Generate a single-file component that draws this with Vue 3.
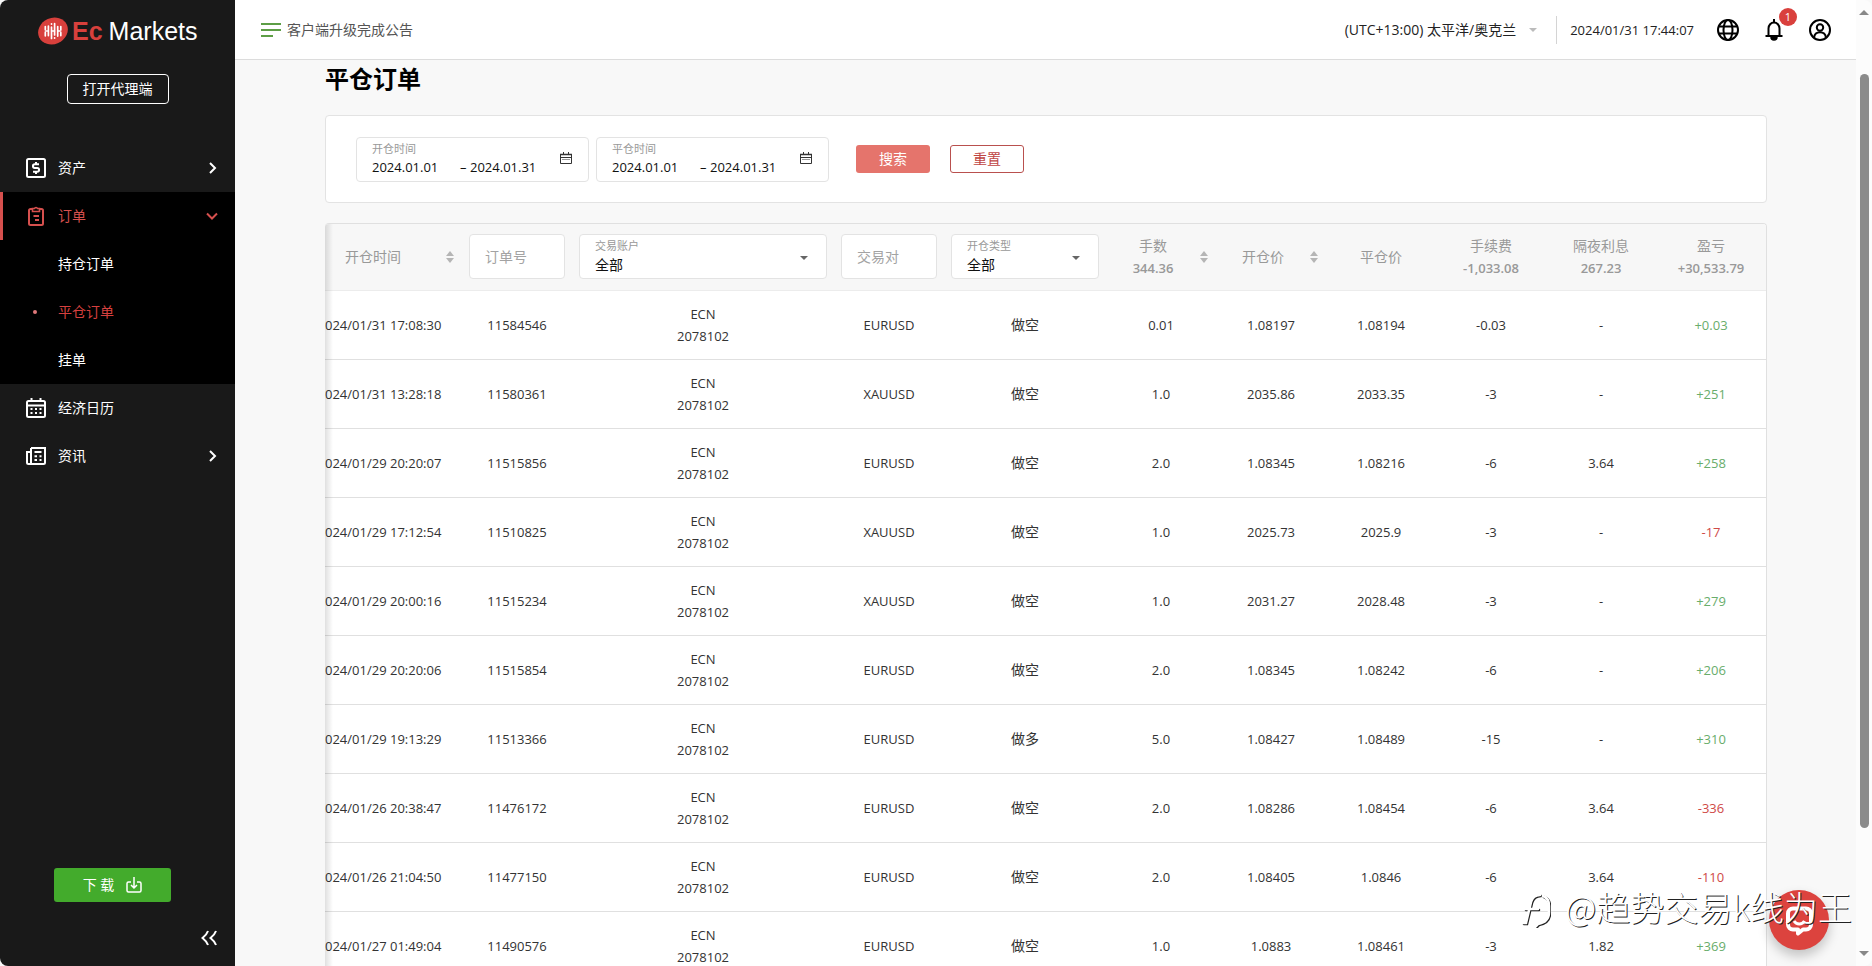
<script setup>
import { ref } from 'vue'

const openFrom = ref('2024.01.01')
const openTo = ref('2024.01.31')
const closeFrom = ref('2024.01.01')
const closeTo = ref('2024.01.31')
const orderNo = ref('')
const symbol = ref('')

const rows = [
  ['024/01/31 17:08:30', '11584546', 'EURUSD', '做空', '0.01', '1.08197', '1.08194', '-0.03', '-', '+0.03'],
  ['024/01/31 13:28:18', '11580361', 'XAUUSD', '做空', '1.0', '2035.86', '2033.35', '-3', '-', '+251'],
  ['024/01/29 20:20:07', '11515856', 'EURUSD', '做空', '2.0', '1.08345', '1.08216', '-6', '3.64', '+258'],
  ['024/01/29 17:12:54', '11510825', 'XAUUSD', '做空', '1.0', '2025.73', '2025.9', '-3', '-', '-17'],
  ['024/01/29 20:00:16', '11515234', 'XAUUSD', '做空', '1.0', '2031.27', '2028.48', '-3', '-', '+279'],
  ['024/01/29 20:20:06', '11515854', 'EURUSD', '做空', '2.0', '1.08345', '1.08242', '-6', '-', '+206'],
  ['024/01/29 19:13:29', '11513366', 'EURUSD', '做多', '5.0', '1.08427', '1.08489', '-15', '-', '+310'],
  ['024/01/26 20:38:47', '11476172', 'EURUSD', '做空', '2.0', '1.08286', '1.08454', '-6', '3.64', '-336'],
  ['024/01/26 21:04:50', '11477150', 'EURUSD', '做空', '2.0', '1.08405', '1.0846', '-6', '3.64', '-110'],
  ['024/01/27 01:49:04', '11490576', 'EURUSD', '做空', '1.0', '1.0883', '1.08461', '-3', '1.82', '+369'],
]
</script>

<template>
  <div class="app">
    <aside class="sidebar">
      <div class="logo">
        <svg class="logo-mark" viewBox="0 0 30 28" aria-hidden="true">
          <ellipse cx="15" cy="14" rx="15.2" ry="13" transform="rotate(-24 15 14)" fill="#d8403c" />
          <g stroke="#fff" stroke-width="1.7" fill="none" stroke-linecap="round">
            <path d="M7.3 9.5v3M7.3 15.4v3.4M10.4 9v9.6M13.5 10v11.4M16.6 6.5v11.5M19.7 9.5v9.6M22.8 9.5v3.2M22.8 15.6v3" />
            <path d="M7.3 14h3.1M13.5 14h3.1M19.7 14h3.1" stroke-width="1.3" />
            <path d="M13.5 7v.1M16.6 21v.1" stroke-width="1.8" />
          </g>
        </svg>
        <span class="logo-ec">Ec</span><span class="logo-name">Markets</span>
      </div>
      <button class="agent" type="button">打开代理端</button>

      <nav class="menu">
        <a href="#" class="item">
          <svg class="icon" viewBox="0 0 20 20" fill="none" stroke="currentColor" stroke-width="2">
            <rect x="1" y="1" width="18" height="18" rx="1.5" />
            <path d="M13 6.2H8.8a1.8 1.8 0 0 0 0 3.7h2.4a1.8 1.8 0 0 1 0 3.8H7M10 4v2.2M10 13.7V16" />
          </svg>
          <span>资产</span>
          <svg class="chev" viewBox="0 0 12 12" fill="none" stroke="currentColor" stroke-width="2"><path d="M4 1l5 5-5 5" /></svg>
        </a>
        <div class="group">
          <a href="#" class="item active">
            <svg class="icon" viewBox="0 0 20 20" fill="none" stroke="currentColor" stroke-width="2">
              <path d="M6 3H4.500A1.500 1.500 0 0 0 3 4.500v13A1.500 1.500 0 0 0 4.500 19h11a1.500 1.500 0 0 0 1.500-1.500v-13A1.500 1.500 0 0 0 15.500 3H14" />
              <path d="M6.500 2.500v3h7v-3h-2a1.600 1.600 0 0 0-3 0z" stroke-width="1.6" />
              <path d="M7.500 10h5.500M9 14h4" stroke-width="1.8" />
            </svg>
            <span>订单</span>
            <svg class="chev" viewBox="0 0 12 12" fill="none" stroke="currentColor" stroke-width="2"><path d="M1 3.500l5 5 5-5" /></svg>
          </a>
          <a href="#" class="item sub">持仓订单</a>
          <a href="#" class="item sub current"><i class="dot"></i>平仓订单</a>
          <a href="#" class="item sub">挂单</a>
        </div>
        <a href="#" class="item">
          <svg class="icon" viewBox="0 0 20 20" fill="none" stroke="currentColor" stroke-width="2">
            <rect x="1" y="3" width="18" height="16" rx="1.5" />
            <path d="M1 7.500h18M5.500 0v4M14.500 0v4" />
            <path d="M4.500 11h2M9 11h2M13.500 11h2M4.500 15h2M9 15h2M13.500 15h2" />
          </svg>
          <span>经济日历</span>
        </a>
        <a href="#" class="item">
          <svg class="icon" viewBox="0 0 20 20" fill="none" stroke="currentColor" stroke-width="2">
            <path d="M5 2h14v14.500a1.500 1.500 0 0 1-1.500 1.500h-15A1.500 1.500 0 0 1 1 16.500V6h4M5 2v16" />
            <path d="M8.500 6h7M8.500 10.300h2.500M13.500 10.300h2M8.500 14h2.500M13.500 14h2" />
          </svg>
          <span>资讯</span>
          <svg class="chev" viewBox="0 0 12 12" fill="none" stroke="currentColor" stroke-width="2"><path d="M4 1l5 5-5 5" /></svg>
        </a>
      </nav>

      <button class="download" type="button">
        <span>下 载</span>
        <svg viewBox="0 0 16 16" fill="none" stroke="currentColor" stroke-width="1.500">
          <path d="M5 5H2.500A1.500 1.500 0 0 0 1 6.500v7A1.500 1.500 0 0 0 2.500 15h11a1.500 1.500 0 0 0 1.500-1.500v-7A1.500 1.500 0 0 0 13.500 5H11M8 0v11M5 8l3 3 3-3" />
        </svg>
      </button>
      <button class="collapse" type="button" aria-label="收起">
        <svg viewBox="0 0 16 16" fill="none" stroke="currentColor" stroke-width="2"><path d="M7 1C6 4 4 6 1.500 8 4 10 6 12 7 15M15 1c-1 3-3 5-5.500 7 2.500 2 4.500 4 5.500 7" /></svg>
      </button>
    </aside>

    <div class="main">
      <header class="topbar">
        <svg class="burger" viewBox="0 0 20 14" stroke="#5d9e46" stroke-width="2"><path d="M0 1h20M0 7h20M0 13h12" /></svg>
        <a href="#" class="notice">客户端升级完成公告</a>
        <button class="zone" type="button">(UTC+13:00) 太平洋/奥克兰 <i class="caret pale"></i></button>
        <time class="clock">2024/01/31 17:44:07</time>
        <button class="tool" type="button" aria-label="语言">
          <svg viewBox="0 0 22 22" fill="none" stroke="#000" stroke-width="2">
            <circle cx="11" cy="11" r="10" /><ellipse cx="11" cy="11" rx="4.500" ry="10" /><path d="M2 7.500h18M2 14.500h18" />
          </svg>
        </button>
        <button class="tool" type="button" aria-label="通知">
          <svg viewBox="0 0 22 22" fill="none" stroke="#000" stroke-width="2">
            <path d="M5.500 16.500V9.500a5.500 6 0 0 1 11 0v7M2.500 17h17" /><path d="M11 0v3.500" /><path d="M8 18a3 3 0 0 0 6 0z" fill="#000" stroke-width="1.500" />
          </svg>
          <span class="badge">1</span>
        </button>
        <button class="tool" type="button" aria-label="用户">
          <svg viewBox="0 0 22 22" fill="none" stroke="#000" stroke-width="2">
            <circle cx="11" cy="11" r="10" /><circle cx="11" cy="8.500" r="3.200" /><path d="M5 18.500c.5-3.500 2.800-5.300 6-5.300s5.500 1.800 6 5.300" />
          </svg>
        </button>
      </header>

      <main class="content">
        <h1>平仓订单</h1>
        <form class="filters" @submit.prevent>
          <div class="range">
            <div class="range-body">
              <label for="open-from">开仓时间</label>
              <div class="dates">
                <input id="open-from" v-model="openFrom" type="text" /><span class="dash">–</span><input v-model="openTo" type="text" aria-label="开仓时间结束" />
              </div>
            </div>
            <svg class="cal" viewBox="0 0 12 12" fill="none" stroke="#333" stroke-width="1"><path d="M.500 2.500h11v9H.500zM.500 5.500h11M3.500 0v3M8.500 0v3" /><path d="M0 2.500h12" stroke-width="1.500" /><path d="M2.500 7.500h7" stroke-dasharray="1 1" /></svg>
          </div>
          <div class="range">
            <div class="range-body">
              <label for="close-from">平仓时间</label>
              <div class="dates">
                <input id="close-from" v-model="closeFrom" type="text" /><span class="dash">–</span><input v-model="closeTo" type="text" aria-label="平仓时间结束" />
              </div>
            </div>
            <svg class="cal" viewBox="0 0 12 12" fill="none" stroke="#333" stroke-width="1"><path d="M.500 2.500h11v9H.500zM.500 5.500h11M3.500 0v3M8.500 0v3" /><path d="M0 2.500h12" stroke-width="1.500" /><path d="M2.500 7.500h7" stroke-dasharray="1 1" /></svg>
          </div>
          <button class="btn solid" type="submit">搜索</button>
          <button class="btn line" type="reset">重置</button>
        </form>

        <div class="table-wrap">
          <table>
            <colgroup>
              <col class="w-time" /><col class="w-std" /><col class="w-acct" /><col class="w-std" /><col class="w-type" />
              <col v-for="n in 6" :key="n" class="w-std" />
            </colgroup>
            <thead>
              <tr>
                <th><div class="sortable"><span>开仓时间</span><button class="sort" type="button" aria-label="按开仓时间排序"><i></i><i></i></button></div></th>
                <th><input v-model="orderNo" class="box" type="text" placeholder="订单号" aria-label="订单号" /></th>
                <th>
                  <div class="box pick">
                    <label for="acct">交易账户</label>
                    <select id="acct"><option>全部</option></select>
                    <i class="caret"></i>
                  </div>
                </th>
                <th><input v-model="symbol" class="box" type="text" placeholder="交易对" aria-label="交易对" /></th>
                <th>
                  <div class="box pick">
                    <label for="kind">开仓类型</label>
                    <select id="kind"><option>全部</option></select>
                    <i class="caret"></i>
                  </div>
                </th>
                <th><div class="sortable"><span>手数<b>344.36</b></span><button class="sort" type="button" aria-label="按手数排序"><i></i><i></i></button></div></th>
                <th><div class="sortable"><span>开仓价</span><button class="sort" type="button" aria-label="按开仓价排序"><i></i><i></i></button></div></th>
                <th>平仓价</th>
                <th>手续费<b>-1,033.08</b></th>
                <th>隔夜利息<b>267.23</b></th>
                <th>盈亏<b>+30,533.79</b></th>
              </tr>
            </thead>
            <tbody>
              <tr v-for="r in rows" :key="r[1]">
                <td class="time">{{ r[0] }}</td>
                <td>{{ r[1] }}</td>
                <td>ECN<br />2078102</td>
                <td>{{ r[2] }}</td>
                <td class="cjk">{{ r[3] }}</td>
                <td>{{ r[4] }}</td>
                <td>{{ r[5] }}</td>
                <td>{{ r[6] }}</td>
                <td>{{ r[7] }}</td>
                <td>{{ r[8] }}</td>
                <td :class="r[9].startsWith('-') ? 'loss' : 'gain'">{{ r[9] }}</td>
              </tr>
            </tbody>
          </table>
        </div>
      </main>
    </div>

    <div class="scroll" aria-hidden="true">
      <i class="tri up"></i>
      <div class="track"><div class="thumb"></div></div>
      <i class="tri down"></i>
    </div>

    <button class="chat" type="button" aria-label="客服">
      <svg viewBox="0 0 32 32" fill="none" stroke="#fff" stroke-width="4" stroke-linejoin="round">
        <path d="M10 4.500h13a5 5 0 0 1 5 5v11a5 5 0 0 1-5 5h-3l-5 4v-4h-5a5 5 0 0 1-5-5v-11a5 5 0 0 1 5-5z" />
        <path d="M11 17c2.500 4 8 4 10.500 0" stroke-width="3" />
      </svg>
    </button>
    <div class="watermark">
      <svg viewBox="0 0 30 36" fill="none" stroke-linecap="round">
        <g stroke="#222" transform="translate(1 1)" stroke-width="2.600"><path d="M2 31h3l5-21q2-7 9-7M4 17h13M22 4q6 2 6 10v6q0 10-11 12l-3 3" /></g>
        <g stroke="#fff" stroke-width="2.600"><path d="M2 31h3l5-21q2-7 9-7M4 17h13M22 4q6 2 6 10v6q0 10-11 12l-3 3" /></g>
      </svg>
      <span>@趋势交易k线为王</span>
    </div>
  </div>
</template>

<style>
body {
  margin: 0;
  overflow: hidden;
}
</style>

<style scoped>
.app {
  display: flex;
  height: 100vh;
  position: relative;
  overflow: hidden;
  background: #f8f8f8;
  color: #333;
  font: 13px/22px "Open Sans", "Noto Sans CJK SC", sans-serif;
}
.app *,
.app *::before {
  box-sizing: border-box;
}
button,
input,
select {
  font: inherit;
  color: inherit;
  margin: 0;
  padding: 0;
  border: 0;
  background: none;
}
input:focus,
select:focus {
  outline: none;
}
a {
  color: inherit;
  text-decoration: none;
}
svg {
  display: block;
  flex: none;
}

.sidebar {
  width: 235px;
  flex: none;
  display: flex;
  flex-direction: column;
  background: #191919;
  color: #fff;
  font-size: 14px;
  border-radius: 8px 0 0 8px;
}
.logo {
  display: flex;
  align-items: center;
  height: 62px;
  padding-left: 38px;
  font-family: "Liberation Sans", Arial, sans-serif;
  font-size: 25px;
  line-height: 28px;
}
.logo-mark {
  width: 30px;
  height: 28px;
  margin-right: 4px;
}
.logo-ec {
  color: #d8403c;
  font-weight: 700;
  margin-right: 6px;
}
.agent {
  align-self: center;
  width: 102px;
  height: 30px;
  margin-top: 12px;
  border: 1px solid #fff;
  border-radius: 4px;
  line-height: 20px;
}
.menu {
  margin-top: 40px;
}
.item {
  display: flex;
  align-items: center;
  height: 48px;
  padding: 0 16px 0 26px;
}
.icon {
  width: 20px;
  height: 20px;
  margin-right: 12px;
}
.chev {
  width: 12px;
  height: 12px;
  margin-left: auto;
  margin-right: 1px;
}
.group {
  background: #000;
}
.active {
  color: #d6504e;
  border-left: 3px solid #d6504e;
  padding-left: 23px;
}
.sub {
  padding-left: 58px;
  position: relative;
}
.current {
  color: #d6403f;
}
.dot {
  position: absolute;
  left: 33px;
  width: 4px;
  height: 4px;
  border-radius: 50%;
  background: #e0787a;
}
.download {
  display: flex;
  align-items: center;
  justify-content: center;
  gap: 12px;
  width: 117px;
  height: 34px;
  margin: auto 0 0 54px;
  border-radius: 3px;
  background: #43ab2c;
}
.download svg {
  width: 16px;
  height: 16px;
}
.collapse {
  align-self: flex-end;
  margin: 28px 18px 20px 0;
}
.collapse svg {
  width: 16px;
  height: 16px;
}

.main {
  flex: 1;
  min-width: 0;
  display: flex;
  flex-direction: column;
}
.topbar {
  display: flex;
  align-items: center;
  height: 60px;
  flex: none;
  padding: 0 25px 0 26px;
  background: #fff;
  border-bottom: 1px solid #dcdcdc;
  color: #222;
}
.burger {
  width: 20px;
  height: 14px;
  margin-right: 6px;
}
.notice {
  font-size: 14px;
  color: #555;
}
.zone {
  display: flex;
  align-items: center;
  gap: 13px;
  margin-left: auto;
  height: 28px;
  padding-right: 19px;
  border-right: 1px solid #d4d4d4;
  font-size: 14px;
}
.clock {
  margin: 0 23px 0 13px;
}
.caret {
  border: 4px solid transparent;
  border-top-color: #666;
  border-bottom: 0;
}
.pale {
  border-top-color: #bbb;
}
.tool {
  position: relative;
  margin-left: 24px;
}
.clock + .tool {
  margin-left: 0;
}
.tool svg {
  width: 22px;
  height: 22px;
}
.badge {
  position: absolute;
  top: -11px;
  left: 16px;
  width: 18px;
  height: 18px;
  border-radius: 50%;
  background: #d9403d;
  color: #fff;
  font-size: 11px;
  line-height: 18px;
}

.content {
  flex: 1;
  min-height: 0;
  overflow: hidden;
  padding: 1px 89px 0 90px;
}
h1 {
  margin: 0 0 18px;
  color: #000;
  font-size: 24px;
  line-height: 36px;
  font-weight: 700;
}
.filters {
  display: flex;
  align-items: center;
  height: 88px;
  padding: 0 30px;
  background: #fff;
  border: 1px solid #e3e3e3;
  border-radius: 4px;
}
.range {
  display: flex;
  align-items: center;
  justify-content: space-between;
  width: 233px;
  height: 45px;
  margin-right: 7px;
  padding: 0 16px 0 15px;
  border: 1px solid #e3e3e3;
  border-radius: 4px;
}
.range label,
.pick label {
  display: block;
  color: #999;
  font-size: 11px;
  line-height: 14px;
}
.dates {
  display: flex;
  align-items: center;
  height: 20px;
  margin-top: 1px;
  color: #111;
}
.dates input {
  width: 70px;
  height: 20px;
}
.dash {
  width: 10px;
  margin-left: 18px;
}
.cal {
  width: 12px;
  height: 12px;
  margin-top: -2px;
}
.btn {
  width: 74px;
  height: 28px;
  border-radius: 3px;
  font-size: 14px;
  line-height: 20px;
}
.solid {
  margin: 0 20px;
  background: #e5746c;
  color: #fff;
}
.line {
  border: 1px solid #b9504e;
  color: #bf4543;
}

.table-wrap {
  position: relative;
  margin-top: 20px;
  overflow: hidden;
  background: #fff;
  border-top: 1px solid #e0e0e0;
  border-right: 1px solid #e0e0e0;
  border-radius: 4px 4px 0 0;
}
.table-wrap::before {
  content: "";
  position: absolute;
  z-index: 1;
  inset: 0 auto 0 0;
  width: 8px;
  background: linear-gradient(90deg, rgba(0, 0, 0, 0.12), transparent);
}
table {
  width: calc(100% + 25px);
  margin-left: -25px;
  table-layout: fixed;
  border-collapse: collapse;
  text-align: center;
}
.w-time,
.w-type {
  width: 162px;
}
.w-std {
  width: 110px;
}
.w-acct {
  width: 262px;
}
th {
  height: 66px;
  padding: 0;
  background: #f7f7f7;
  border-bottom: 1px solid #ececec;
  color: #999;
  font-size: 14px;
  font-weight: 400;
}
th b {
  display: block;
  font-size: 13px;
  font-weight: 600;
}
.sortable {
  display: flex;
  align-items: center;
  padding: 0 4px;
}
.sortable > span {
  flex: 1;
}
.sort {
  width: 16px;
  display: flex;
  flex-direction: column;
  align-items: center;
  gap: 2px;
}
.sort i {
  border: 4px solid transparent;
  border-top: 0;
  border-bottom: 5px solid #b5b5b5;
}
.sort i + i {
  border-top: 5px solid #b5b5b5;
  border-bottom: 0;
}
.box {
  display: block;
  position: relative;
  width: calc(100% - 14px);
  height: 45px;
  margin: 0 7px;
  padding: 0 15px;
  background: #fff;
  border: 1px solid #e3e3e3;
  border-radius: 4px;
  text-align: left;
}
.box::placeholder {
  color: #a3a3a3;
  opacity: 1;
}
.pick label {
  margin-top: 4px;
}
.pick select {
  display: block;
  width: 100%;
  height: 24px;
  appearance: none;
  color: #111;
}
.pick .caret {
  position: absolute;
  right: 18px;
  top: 21px;
  pointer-events: none;
}
td {
  height: 69px;
  padding: 0;
  border-bottom: 1px solid #e0e0e0;
}
.time {
  padding-left: 25px;
  text-align: left;
}
.cjk {
  font-size: 14px;
}
.gain {
  color: #69ad6b;
}
.loss {
  color: #cf4a47;
}

.scroll {
  width: 16px;
  flex: none;
  display: flex;
  flex-direction: column;
  align-items: center;
  background: #fcfcfc;
  border-radius: 0 8px 8px 0;
  padding: 10px 0;
}
.tri {
  border: 5px solid transparent;
  border-top: 0;
  border-bottom: 5px solid #888;
}
.down {
  border-top: 5px solid #888;
  border-bottom: 0;
}
.track {
  flex: 1;
  width: 9px;
  padding-top: 59px;
}
.thumb {
  height: 86%;
  border-radius: 5px;
  background: #8b8b8b;
}

.chat {
  position: absolute;
  right: 43px;
  bottom: 16px;
  display: flex;
  align-items: center;
  justify-content: center;
  width: 60px;
  height: 60px;
  border-radius: 50%;
  background: #dc433e;
  box-shadow: 0 6px 12px rgba(0, 0, 0, 0.22);
}
.chat svg {
  width: 32px;
  height: 32px;
}
.watermark {
  position: absolute;
  right: 20px;
  bottom: 35px;
  display: flex;
  align-items: center;
  gap: 14px;
  color: #fff;
  font-family: "Noto Sans CJK SC", sans-serif;
  font-size: 34px;
  font-weight: 300;
  line-height: 48px;
  text-shadow: 1px 1px 0 #222;
  white-space: nowrap;
  pointer-events: none;
}
.watermark svg {
  width: 30px;
  height: 36px;
  margin-top: 6px;
}
</style>
